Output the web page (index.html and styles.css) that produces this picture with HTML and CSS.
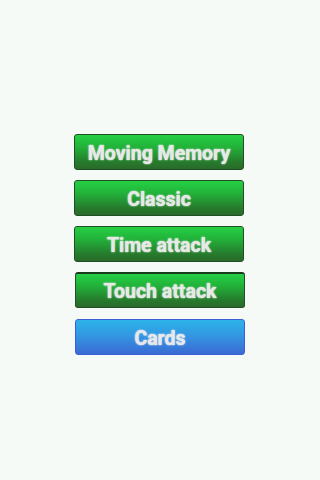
FILE: index.html
```html
<!DOCTYPE html>
<html>
<head>
<meta charset="utf-8">
<link rel="stylesheet" href="styles.css">
</head>
<body>
<div class="menu">
  <div class="btn green">Moving Memory</div>
  <div class="btn green">Classic</div>
  <div class="btn green">Time attack</div>
  <div class="btn green pressed">Touch attack</div>
  <div class="btn blue">Cards</div>
</div>
</body>
</html>
```
FILE: styles.css
```css
html, body {
  margin: 0;
  padding: 0;
  background: #f6faf6;
  width: 320px;
  height: 480px;
  overflow: hidden;
}
.menu {
  display: flex;
  flex-direction: column;
  align-items: center;
  gap: 10px;
  padding-top: 134px;
}
.btn {
  box-sizing: border-box;
  width: 170px;
  height: 36px;
  padding-top: 2px;
  border-radius: 3px;
  display: flex;
  align-items: center;
  justify-content: center;
  font-family: Roboto, "Liberation Sans", sans-serif;
  font-weight: bold;
  font-size: 19.5px;
  color: #e8e8e8;
  text-shadow: 0 0 2px rgba(255,255,255,0.8), 0 0 1px rgba(255,255,255,0.6);
  position: relative;
  left: -1px;
}
.green {
  border: 1.5px solid #1f4f22;
  background: linear-gradient(to bottom, #25d044 0%, #22b23a 35%, #267a2c 80%, #2a6a2b 100%);
}
.pressed {
  border-top: 2px solid #1a3c1c;
  left: 0;
}
.blue {
  left: 0;
  margin-top: 1px;
  border: 1.5px solid #3d5fd6;
  background: linear-gradient(to bottom, #2db3ea 0%, #3397e2 45%, #3a6ad4 100%);
}
```
